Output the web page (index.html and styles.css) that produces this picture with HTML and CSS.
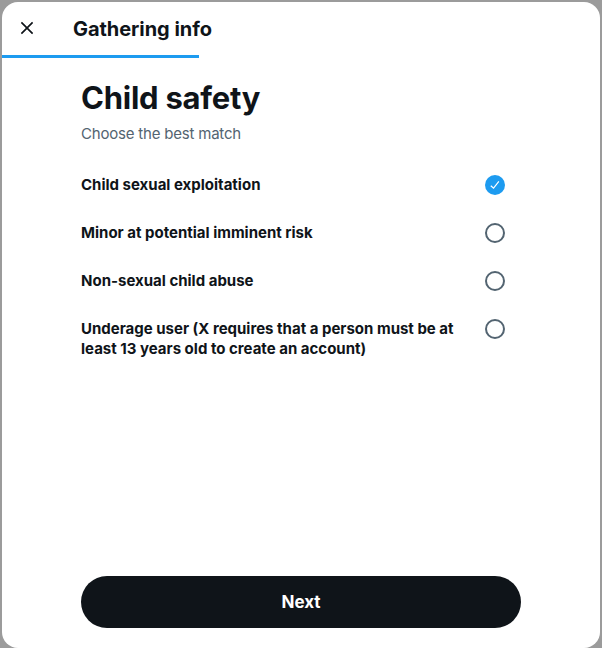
FILE: index.html
```html
<!DOCTYPE html>
<html lang="en">
<head>
<meta charset="utf-8">
<title>Gathering info</title>
<link rel="stylesheet" href="styles.css">
</head>
<body>
<div class="backdrop">
  <div class="modal" role="dialog" aria-labelledby="title">
    <header class="modal-header">
      <button class="close-btn" aria-label="Close">
        <svg viewBox="0 0 24 24" width="20" height="20" aria-hidden="true"><path d="M10.59 12L4.54 5.96l1.42-1.42L12 10.59l6.04-6.05 1.42 1.42L13.41 12l6.05 6.04-1.42 1.42L12 13.41l-6.04 6.05-1.42-1.42L10.59 12z"/></svg>
      </button>
      <h2 class="header-title">Gathering info</h2>
    </header>
    <div class="progress"><div class="progress-fill"></div></div>
    <main class="modal-body">
      <h1 class="title" id="title">Child safety</h1>
      <p class="subtitle">Choose the best match</p>
      <ul class="options">
        <li class="option">
          <span class="option-label">Child sexual exploitation</span>
          <span class="radio checked">
            <svg viewBox="0 0 24 24" width="14" height="14" aria-hidden="true"><path d="M9.64 18.952l-5.55-4.861 1.317-1.504 3.951 3.459 8.459-10.948L19.4 6.32 9.64 18.952z"/></svg>
          </span>
        </li>
        <li class="option">
          <span class="option-label">Minor at potential imminent risk</span>
          <span class="radio"></span>
        </li>
        <li class="option">
          <span class="option-label">Non-sexual child abuse</span>
          <span class="radio"></span>
        </li>
        <li class="option">
          <span class="option-label">Underage user (X requires that a person must be at least 13 years old to create an account)</span>
          <span class="radio"></span>
        </li>
      </ul>
    </main>
    <footer class="modal-footer">
      <button class="next-btn">Next</button>
    </footer>
  </div>
</div>
</body>
</html>
```

FILE: styles.css
```css
* { box-sizing: border-box; }

html, body {
  margin: 0;
  padding: 0;
  height: 100%;
}

body {
  background: #9b9b9b;
  font-family: Inter, "Noto Sans", "Liberation Sans", sans-serif;
  color: #0f1419;
  overflow: hidden;
}

.backdrop {
  padding: 2px 2px 0 2px;
  height: 100%;
}

.modal {
  width: 598px;
  height: 646px;
  background: #ffffff;
  border-radius: 16px;
  display: flex;
  flex-direction: column;
  overflow: hidden;
}

.modal-header {
  height: 53px;
  display: flex;
  align-items: center;
  padding-left: 7px;
}

.close-btn {
  width: 36px;
  height: 36px;
  border: none;
  background: transparent;
  border-radius: 50%;
  display: flex;
  align-items: center;
  justify-content: center;
  padding: 0;
  margin-top: -1px;
  cursor: pointer;
}

.close-btn svg {
  fill: #0f1419;
}

.header-title {
  margin: 0 0 0 28px;
  font-size: 20px;
  font-weight: 700;
  line-height: 24px;
  letter-spacing: -0.05px;
}

.progress {
  height: 3px;
  background: #ffffff;
}

.progress-fill {
  width: 33%;
  height: 100%;
  background: #1d9bf0;
}

.modal-body {
  flex: 1;
  padding: 22px 79px 0 79px;
}

.title {
  margin: 0;
  font-size: 31px;
  font-weight: 700;
  line-height: 36px;
  letter-spacing: -0.25px;
}

.subtitle {
  margin: 8px 0 0 0;
  font-size: 15px;
  line-height: 20px;
  color: #536471;
  letter-spacing: -0.2px;
}

.options {
  list-style: none;
  margin: 17px 0 0 0;
  padding: 0;
}

.option {
  display: flex;
  align-items: flex-start;
  justify-content: space-between;
  padding: 14px 0;
  gap: 24px;
}

.option-label {
  font-size: 15px;
  font-weight: 700;
  line-height: 20px;
  max-width: 380px;
}

.radio {
  flex: none;
  width: 20px;
  height: 20px;
  border-radius: 50%;
  border: 2px solid #536471;
  margin-right: 16px;
  display: flex;
  align-items: center;
  justify-content: center;
}

.radio.checked {
  border: none;
  background: #1d9bf0;
}

.radio.checked svg {
  fill: #ffffff;
}

.modal-footer {
  padding: 0 79px 20px 79px;
}

.next-btn {
  width: 100%;
  height: 52px;
  border: none;
  border-radius: 26px;
  background: #0f1419;
  color: #ffffff;
  font-family: inherit;
  font-size: 17px;
  font-weight: 700;
  cursor: pointer;
}
```
